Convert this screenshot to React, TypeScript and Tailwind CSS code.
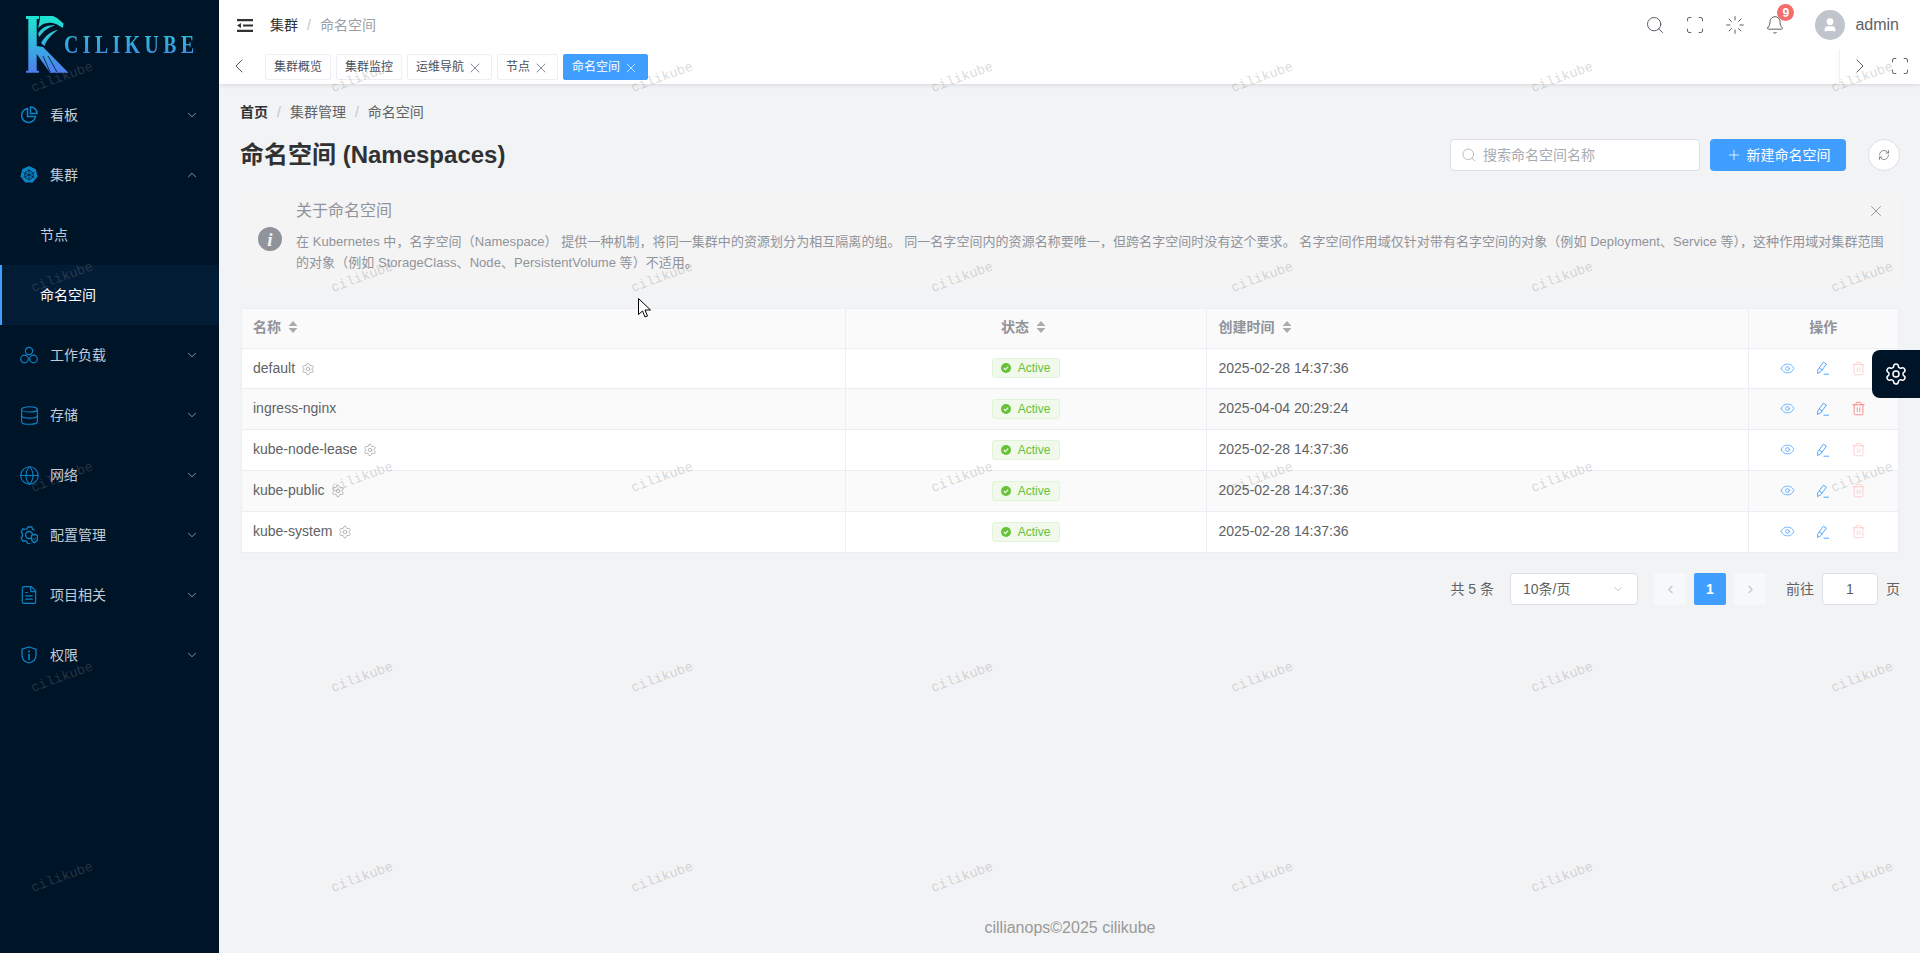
import React from 'react';
import {
  ChevronDown, ChevronUp, ChevronLeft, ChevronRight, X, Search, Scan, Loader, Bell, User, Plus, RefreshCw,
  Settings, Eye, Trash2, Database, Globe, FileText,
} from 'lucide-react';

const SANS = 'font-["Liberation_Sans","Noto_Sans_CJK_SC",sans-serif]';

const namespaces = [
  { name: 'default', system: true, created: '2025-02-28 14:37:36' },
  { name: 'ingress-nginx', system: false, created: '2025-04-04 20:29:24' },
  { name: 'kube-node-lease', system: true, created: '2025-02-28 14:37:36' },
  { name: 'kube-public', system: true, created: '2025-02-28 14:37:36' },
  { name: 'kube-system', system: true, created: '2025-02-28 14:37:36' },
];

// 侧边栏图标
const PieIcon = () => (
  <svg width="18" height="18" viewBox="0 0 18 18" fill="none" stroke="currentColor" strokeWidth="1.5">
    <path d="M7.5 2.5a7 7 0 1 0 8 8H7.5z" />
    <path d="M10.5 1a6.5 6.5 0 0 1 6.5 6.5h-6.5z" />
  </svg>
);
const KubeIcon = () => (
  <svg width="18" height="18" viewBox="0 0 18 18">
    <path d="M9 0l6.8 3.3 1.7 7.3-4.7 5.9H5.2L.5 10.6l1.7-7.3z" fill="currentColor" />
    <circle cx="9" cy="9" r="4.3" fill="none" stroke="#001428" strokeWidth="0.8" />
    <path d="M9 3.2v11.6M3.5 6.5l11 5M14.5 6.5l-11 5" stroke="#001428" strokeWidth="0.7" />
  </svg>
);
const WorkloadIcon = () => (
  <svg width="18" height="18" viewBox="0 0 18 18" fill="none" stroke="currentColor" strokeWidth="1.2">
    <circle cx="9" cy="5" r="3.6" />
    <circle cx="4.5" cy="13" r="3.8" />
    <circle cx="13.5" cy="13" r="3.8" />
  </svg>
);
const ConfigIcon = () => (
  <svg width="18" height="18" viewBox="0 0 18 18" fill="none" stroke="currentColor" strokeWidth="1.3">
    <path d="M14.5 4.2L12.6 3l-.9-2H8l-1 1.8-2.2.5L3 2.8 1.2 6l1.2 1.7v2.6L1.2 12 3 15.2l2-.5 2 1.3.9 1.8h2.6" />
    <circle cx="9" cy="9" r="3.5" />
    <path d="M11.5 9.5l3-1.2 3 1.2v3.2c0 2-1.5 3.3-3 4-1.5-.7-3-2-3-4z" fill="#001428" />
    <path d="M13 12.5l1.2 1.2 1.8-2" strokeWidth="1" />
  </svg>
);
const ShieldInfoIcon = () => (
  <svg width="18" height="18" viewBox="0 0 18 18" fill="none" stroke="currentColor" strokeWidth="1.3">
    <path d="M9 1l7 2.2v6c0 4-3.5 6.8-7 7.8-3.5-1-7-3.8-7-7.8v-6z" />
    <circle cx="9" cy="5.5" r="1" fill="currentColor" stroke="none" />
    <path d="M9 8v6" strokeWidth="1.6" />
  </svg>
);
const EditIcon = () => (
  <svg width="14" height="14" viewBox="0 0 14 14" fill="none" stroke="currentColor" strokeWidth="0.9">
    <path d="M1.5 12.5l.3-3.6L7.4 1.2l3 1.9-5.6 7.7z" />
    <path d="M3.2 7l3 1.9" />
    <path d="M7.5 13.2H13" />
  </svg>
);

const menuItems = [
  { label: '看板', icon: <PieIcon /> },
  { label: '集群', icon: <KubeIcon />, open: true },
  { label: '工作负载', icon: <WorkloadIcon /> },
  { label: '存储', icon: <Database size={21} strokeWidth={1.3} className="shrink-0" /> },
  { label: '网络', icon: <Globe size={21} strokeWidth={1.2} className="shrink-0" /> },
  { label: '配置管理', icon: <ConfigIcon /> },
  { label: '项目相关', icon: <FileText size={20} strokeWidth={1.4} className="shrink-0" /> },
  { label: '权限', icon: <ShieldInfoIcon /> },
];

const Logo = () => (
  <div className="h-[85px] flex items-start pl-[26px] pt-[16px] shrink-0">
    <svg width="43" height="57" viewBox="0 0 43 57" className="shrink-0">
      <defs>
        <linearGradient id="kgrad" x1="0" y1="0" x2="0" y2="1">
          <stop offset="0" stopColor="#1de6cf" />
          <stop offset="1" stopColor="#4f7df0" />
        </linearGradient>
      </defs>
      <path
        fill="url(#kgrad)"
        d="M0 0H13V3H10.7V54.7H13V56.7H0V54.7H2.3V3H0Z M14 0H27L31 2L37.5 7.5L37 12L31 8.5C26 6 19 6 15 9.5L12 12C13 8 14 4 14 0Z M12 18C15 12 22 8.5 29 9.5C23 11 17 15 13.5 21Z M15 27C19 20 25 15 32 14C26 18 21 23 18.5 30Z M10.7 30L17 31L42.5 56.7H24L10.7 38Z"
      />
      <path d="M17 40L24 56M22 40L31 56" stroke="#001428" strokeWidth="0.8" />
    </svg>
    <span className='ml-[-5px] mt-[16px] font-["Liberation_Serif",serif] font-bold text-[26px] leading-[26px] tracking-[5.9px] scale-x-[0.76] origin-left whitespace-nowrap bg-gradient-to-b from-[#2cc3d6] to-[#3f86e4] bg-clip-text text-transparent'>
      CILIKUBE
    </span>
  </div>
);

const MenuRow = ({ label, icon, open }: { label: string; icon: React.ReactNode; open?: boolean }) => (
  <div className="h-[60px] flex items-center pl-[20px] pr-[20px] text-[14px] text-[#c3ccd6]">
    <span className="w-[18px] h-[18px] mr-[12px] text-[#0a84c6] flex items-center justify-center">{icon}</span>
    <span className="flex-1">{label}</span>
    {open ? <ChevronUp size={14} strokeWidth={1.2} /> : <ChevronDown size={14} strokeWidth={1.2} />}
  </div>
);

const Sidebar = () => (
  <aside className="w-[219px] shrink-0 h-full bg-[#001428] flex flex-col">
    <Logo />
    {menuItems.slice(0, 2).map((m) => (
      <MenuRow key={m.label} {...m} />
    ))}
    <div className="h-[60px] flex items-center pl-[40px] text-[14px] text-[#c3ccd6]">节点</div>
    <div className="h-[60px] flex items-center pl-[38px] text-[14px] text-white bg-[#021c36] border-l-2 border-[#409eff]">命名空间</div>
    {menuItems.slice(2).map((m) => (
      <MenuRow key={m.label} {...m} />
    ))}
  </aside>
);

const Tab = ({ label, closable, active }: { label: string; closable?: boolean; active?: boolean }) => (
  <div
    className={`h-[26px] px-[8px] flex items-center gap-[3px] text-[12px] rounded-[2px] border ${
      active ? 'bg-[#409eff] border-[#409eff] text-white' : 'bg-white border-[#ebeef5] text-[#495060]'
    }`}
  >
    {label}
    {closable && <X size={16} strokeWidth={1} className="mt-[2px]" />}
  </div>
);

const Header = () => (
  <header className="relative z-10 h-[84px] shrink-0 bg-white shadow-[0_1px_4px_rgba(0,21,41,0.12)]">
    <div className="h-[50px] flex items-center pl-[18px] pr-[21px]">
      <svg width="16" height="13" viewBox="0 0 16 13" fill="#303133">
        <path d="M0 0h16v2.2H0zM6 5.4h10v2.2H6zM0 10.8h16V13H0zM0 6.5L4 4v5z" />
      </svg>
      <span className="ml-[17px] text-[14px] text-[#303133]">集群</span>
      <span className="mx-[9px] text-[14px] text-[#c0c4cc]">/</span>
      <span className="text-[14px] text-[#9a9ea6]">命名空间</span>
      <div className="flex-1" />
      <div className="flex items-center gap-[20px] text-[#5a5e66]">
        <Search size={20} strokeWidth={1.2} />
        <Scan size={20} strokeWidth={1.2} />
        <Loader size={20} strokeWidth={1.2} />
        <span className="relative flex">
          <Bell size={20} strokeWidth={1.2} />
          <span className="absolute left-[12px] top-[-11px] w-[17px] h-[17px] rounded-full bg-[#f56c6c] text-white text-[12px] font-bold flex items-center justify-center">9</span>
        </span>
      </div>
      <div className="ml-[30px] w-[30px] h-[30px] rounded-full bg-[#c0c4cc] flex items-center justify-center">
        <User size={16} className="text-white fill-white" />
      </div>
      <span className="ml-[10px] text-[16px] text-[#606266]">admin</span>
    </div>
    <div className="h-[34px] flex items-start">
      <div className="w-[46px] h-[34px] flex items-center pl-[8px] pb-[2px] text-[#5a5e66]">
        <ChevronLeft size={24} strokeWidth={1} />
      </div>
      <div className="flex gap-[5px] pt-[4px]">
        <Tab label="集群概览" />
        <Tab label="集群监控" />
        <Tab label="运维导航" closable />
        <Tab label="节点" closable />
        <Tab label="命名空间" closable active />
      </div>
      <div className="flex-1" />
      <div className="w-[81px] h-[34px] flex items-center border-l border-[#f0f0f0] pl-[8px] pb-[2px] gap-[18px] text-[#5a5e66] shadow-[-2px_0_4px_rgba(0,0,0,0.02)]">
        <ChevronRight size={24} strokeWidth={1} />
        <Scan size={20} strokeWidth={1.2} />
      </div>
    </div>
  </header>
);

const SortCaret = () => (
  <svg width="10" height="14" viewBox="0 0 10 14" fill="#a8abb2" className="ml-[7px]">
    <path d="M5 1l4.5 5H.5zM5 13L.5 8h9z" />
  </svg>
);

const NamespaceTable = () => (
  <div className="mt-[21px] mx-[1px] border border-[#ebeef5]">
    <table className="w-full table-fixed border-collapse text-[14px] text-[#606266]">
      <colgroup>
        <col className="w-[603px]" />
        <col className="w-[361px]" />
        <col className="w-[542px]" />
        <col />
      </colgroup>
      <thead>
        <tr className="h-[39px] bg-[#fafafa] text-[14px] text-[#909399] font-bold border-b border-[#ebeef5]">
          <th className="px-[11px] pb-[2px] text-left border-r border-[#ebeef5]">
            <span className="flex items-center">名称<SortCaret /></span>
          </th>
          <th className="pl-[10px] pr-[14px] pb-[2px] border-r border-[#ebeef5]">
            <span className="flex items-center justify-center">状态<SortCaret /></span>
          </th>
          <th className="px-[12px] pb-[2px] text-left border-r border-[#ebeef5]">
            <span className="flex items-center">创建时间<SortCaret /></span>
          </th>
          <th className="pb-[2px] text-center font-bold">操作</th>
        </tr>
      </thead>
      <tbody>
        {namespaces.map((ns, i) => (
          <tr key={ns.name} className={`${i === 0 ? 'h-[40px]' : 'h-[41px]'} ${i % 2 === 1 ? 'bg-[#fafafa]' : 'bg-white'} ${i < 4 ? 'border-b border-[#ebeef5]' : ''}`}>
            <td className="px-[11px] border-r border-[#ebeef5]">
              <span className="flex items-center gap-[6px]">
                {ns.name}
                {ns.system && <Settings size={14} strokeWidth={1.1} className="text-[#909399] mt-[1px]" />}
              </span>
            </td>
            <td className="border-r border-[#ebeef5]">
              <span className="mx-auto w-[68px] h-[20px] flex items-center justify-center gap-[7px] rounded-[3px] border border-[#e1f3d8] bg-[#f0f9eb] text-[12px] text-[#67c23a]">
                <svg width="10" height="10" viewBox="0 0 10 10">
                  <circle cx="5" cy="5" r="5" fill="#67c23a" />
                  <path d="M2.8 5l1.6 1.6 2.8-3" fill="none" stroke="#f0f9eb" strokeWidth="1.2" />
                </svg>
                Active
              </span>
            </td>
            <td className="px-[12px] border-r border-[#ebeef5]">{ns.created}</td>
            <td>
              <span className="flex items-center justify-center gap-[21px] text-[#409eff]">
                <Eye size={15} strokeWidth={1.2} />
                <EditIcon />
                <Trash2 size={15} strokeWidth={1.2} className={ns.system ? 'text-[#f56c6c] opacity-40' : 'text-[#f56c6c]'} />
              </span>
            </td>
          </tr>
        ))}
      </tbody>
    </table>
  </div>
);

const Pagination = () => (
  <div className="mt-[20px] flex items-center justify-end text-[14px] text-[#606266]">
    <span>共 5 条</span>
    <div className="ml-[16px] w-[128px] h-[32px] px-[12px] flex items-center justify-between bg-white border border-[#dcdfe6] rounded-[4px]">
      10条/页
      <ChevronDown size={14} strokeWidth={1.1} className="text-[#a8abb2]" />
    </div>
    <div className="ml-[16px] w-[32px] h-[32px] rounded-[2px] bg-[#f7f8fa] flex items-center justify-center text-[#c0c4cc]">
      <ChevronLeft size={13} />
    </div>
    <div className="ml-[8px] w-[32px] h-[32px] rounded-[2px] bg-[#409eff] text-white font-bold flex items-center justify-center">1</div>
    <div className="ml-[8px] w-[32px] h-[32px] rounded-[2px] bg-[#f7f8fa] flex items-center justify-center text-[#c0c4cc]">
      <ChevronRight size={13} />
    </div>
    <span className="ml-[20px]">前往</span>
    <div className="ml-[8px] w-[56px] h-[32px] bg-white border border-[#dcdfe6] rounded-[4px] flex items-center justify-center">1</div>
    <span className="ml-[8px]">页</span>
  </div>
);

const Watermarks = () => (
  <div className="absolute inset-0 overflow-hidden pointer-events-none z-30">
    <div className="absolute left-[-88px] top-[-22px] w-[2100px] flex flex-wrap">
      {Array.from({ length: 35 }).map((_, i) => (
        <div key={i} className="w-[300px] h-[200px] flex items-center justify-center">
          <span className='-rotate-[20deg] font-["Liberation_Mono",monospace] text-[13.5px] text-[rgba(128,128,128,0.3)]'>cilikube</span>
        </div>
      ))}
    </div>
  </div>
);

export default function App() {
  return (
    <div className={`relative w-full h-[953px] overflow-hidden flex bg-[#f2f3f5] ${SANS}`}>
      <Sidebar />
      <div className="flex-1 min-w-0 flex flex-col">
        <Header />
        <main className="flex-1 pl-[21px] pr-[20px] pt-[20px] flex flex-col">
          <div className="h-[16px] flex items-center text-[14px] text-[#606266]">
            <span className="font-bold text-[#303133]">首页</span>
            <span className="mx-[9px] text-[#c0c4cc]">/</span>
            <span>集群管理</span>
            <span className="mx-[9px] text-[#c0c4cc]">/</span>
            <span>命名空间</span>
          </div>
          <div className="mt-[19px] h-[32px] flex items-center">
            <h1 className="flex-1 text-[24px] font-bold text-[#303133]">命名空间 (Namespaces)</h1>
            <div className="w-[250px] h-[32px] px-[10px] flex items-center gap-[6px] bg-white border border-[#dcdfe6] rounded-[4px] text-[14px] text-[#a8abb2]">
              <Search size={16} strokeWidth={1.2} />
              搜索命名空间名称
            </div>
            <div className="ml-[10px] w-[136px] h-[32px] flex items-center justify-center gap-[5px] rounded-[4px] bg-[#409eff] text-[14px] text-white">
              <Plus size={16} strokeWidth={1.2} />
              新建命名空间
            </div>
            <div className="ml-[22px] w-[32px] h-[32px] rounded-full bg-white border border-[#dcdfe6] flex items-center justify-center text-[#606266]">
              <RefreshCw size={12} strokeWidth={1.4} />
            </div>
          </div>
          <div className="relative mt-[19px] h-[97px] rounded-[6px] bg-[#f4f4f5] pl-[56px] pr-[16px] pt-[10px] flex flex-col text-[#909399]">
            <div className="absolute left-[18px] top-[37px] w-[24px] h-[24px] rounded-full bg-[#909399] flex items-center justify-center">
              <span className='font-["Liberation_Serif",serif] italic font-bold text-[19px] leading-none text-[#f4f4f5]'>i</span>
            </div>
            <X size={18} strokeWidth={1.2} className="absolute right-[15px] top-[12px]" />
            <div className="text-[16px] leading-[22px]">关于命名空间</div>
            <p className="mt-[9px] text-[13px] leading-[21px] tracking-[0.05px]">
              在 Kubernetes 中，名字空间（Namespace） 提供一种机制，将同一集群中的资源划分为相互隔离的组。 同一名字空间内的资源名称要唯一，但跨名字空间时没有这个要求。 名字空间作用域仅针对带有名字空间的对象（例如 Deployment、Service 等），这种作用域对集群范围的对象（例如 StorageClass、Node、PersistentVolume 等）不适用。
            </p>
          </div>
          <NamespaceTable />
          <Pagination />
          <div className="flex-1" />
          <div className="h-[37px] text-center text-[16px] text-[#999999]">cillianops©2025 cilikube</div>
        </main>
      </div>
      {/* 右侧悬浮设置按钮 */}
      <div className="absolute right-0 top-[350px] z-20 w-[48px] h-[48px] rounded-l-[8px] bg-[#001428] flex items-center justify-center text-white">
        <Settings size={24} strokeWidth={1.5} />
      </div>
      {/* 鼠标指针 */}
      <svg width="13" height="20" viewBox="0 0 13 20" className="absolute left-[638px] top-[298px] z-40">
        <path d="M.5.5v16l4-3.5 2.5 6 2.5-1-2.5-6h5.5z" fill="#fff" stroke="#000" strokeWidth="1" />
      </svg>
      <Watermarks />
    </div>
  );
}
